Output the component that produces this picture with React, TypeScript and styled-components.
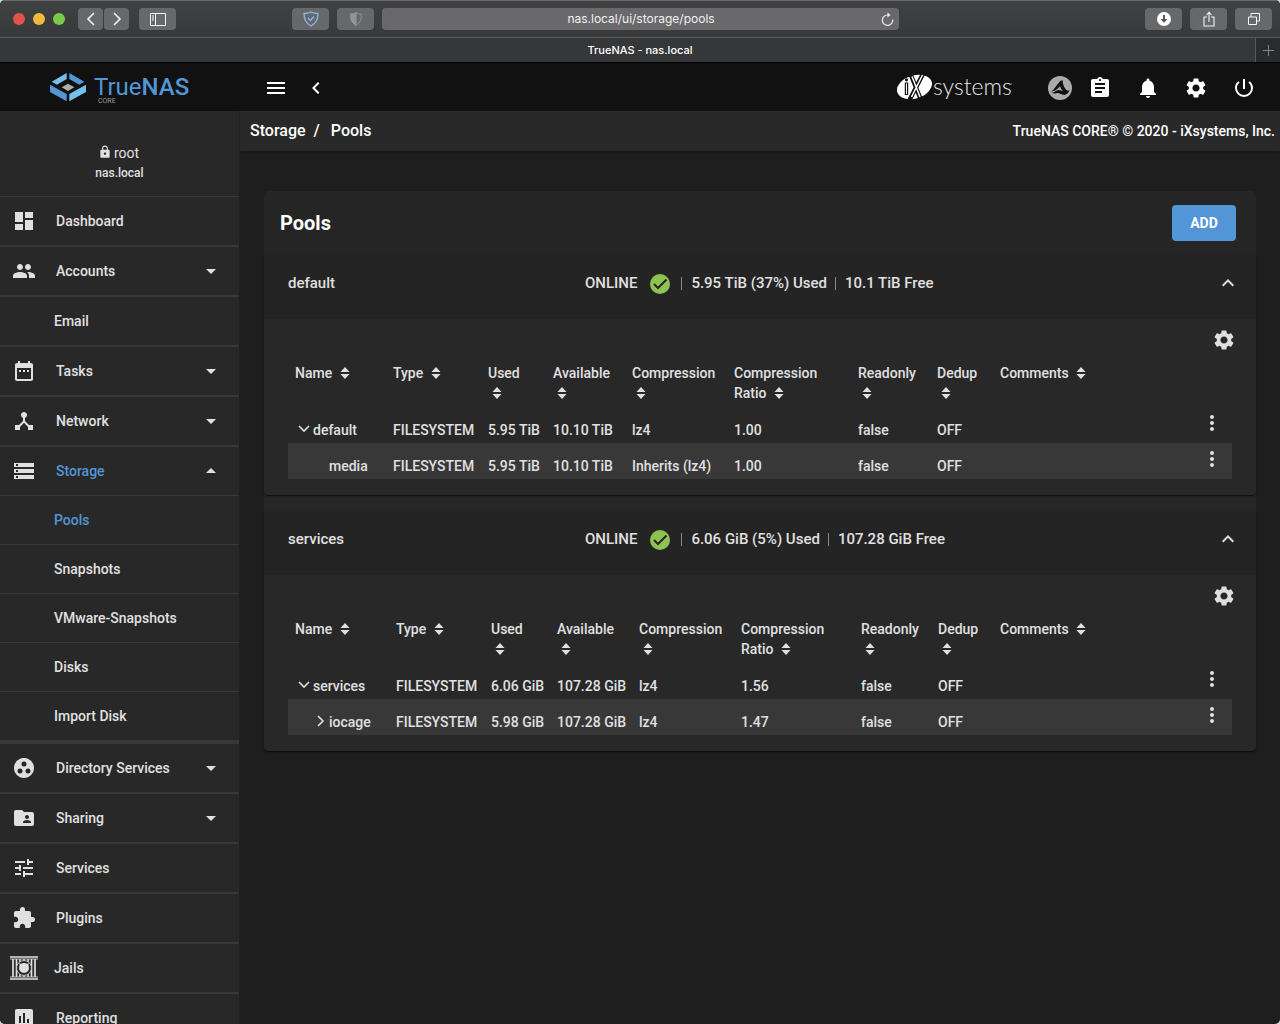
import React from "react";
import styled, { createGlobalStyle } from "styled-components";
import {
  MdArrowDropDown,
  MdArrowDropUp,
  MdAssessment,
  MdAssignment,
  MdChevronLeft,
  MdDashboard,
  MdDateRange,
  MdDeviceHub,
  MdExpandLess,
  MdExtension,
  MdFolderShared,
  MdGroupWork,
  MdLock,
  MdMenu,
  MdMoreVert,
  MdNotifications,
  MdPeople,
  MdPowerSettingsNew,
  MdSettings,
  MdStorage,
  MdTune,
} from "react-icons/md";

const color = {
  page: "#1e1e1e",
  bar: "#111111",
  panel: "#282828",
  panelHead: "#242424",
  stripe: "#383838",
  line: "#383838",
  text: "#e0e0e0",
  white: "#ffffff",
  primary: "#5396d8",
  green: "#8fc351",
};

const weight = { label: 500, bold: 700 };

const GlobalStyle = createGlobalStyle`
  * { box-sizing: border-box; }
  body {
    margin: 0;
    background: #d8d8d8;
    font-family: Roboto, "Liberation Sans", sans-serif;
    font-size: 14px;
    line-height: 20px;
    color: ${color.text};
  }
  button {
    border: 0;
    padding: 0;
    background: none;
    color: inherit;
    font: inherit;
    cursor: pointer;
  }
  svg { display: block; }
`;

/* ---------- Browser window ---------- */

const Window = styled.div`
  display: flex;
  flex-direction: column;
  height: 100vh;
  overflow: hidden;
  border-radius: 5px;
  background: ${color.page};
`;

const Toolbar = styled.div`
  display: flex;
  align-items: center;
  gap: 8px;
  height: 38px;
  flex: none;
  padding: 0 8px 0 13px;
  border-top: 1px solid #6a6b6c;
  border-bottom: 1px solid #58595b;
  background: linear-gradient(#404143, #38393b);
`;

const Lights = styled.div`
  display: flex;
  gap: 8px;
  margin-right: 5px;
`;

const Light = styled.button<{ $fill: string }>`
  width: 12px;
  height: 12px;
  border-radius: 50%;
  background: ${(p) => p.$fill};
`;

const NavPair = styled.div`
  display: flex;
  gap: 1px;
  margin-right: 2px;
`;

const ToolButton = styled.button<{ $narrow?: boolean }>`
  display: flex;
  align-items: center;
  justify-content: center;
  width: ${(p) => (p.$narrow ? 25 : 37)}px;
  height: 22px;
  border-radius: 4px;
  background: #67686a;
  color: #f4f4f4;
`;

const Shields = styled.div`
  display: flex;
  gap: 8px;
  margin-left: 108px;
`;

const Address = styled.form`
  display: flex;
  align-items: center;
  flex: 1;
  min-width: 0;
  height: 22px;
  margin-right: 238px;
  padding: 0 5px 0 19px;
  border-radius: 4px;
  background: #69696b;
`;

const AddressInput = styled.input`
  flex: 1;
  min-width: 0;
  border: 0;
  outline: 0;
  background: none;
  text-align: center;
  font: 400 12px/16px Inter, "Liberation Sans", sans-serif;
  color: #f0f0f0;
`;

const TabBar = styled.div`
  display: flex;
  height: 25px;
  flex: none;
  border-bottom: 1px solid #000;
  background: #363739;
`;

const Tab = styled.div`
  flex: 1;
  padding-left: 25px;
  text-align: center;
  font: 500 11px/24px Inter, "Liberation Sans", sans-serif;
  color: ${color.white};
`;

const NewTab = styled.button`
  display: flex;
  align-items: center;
  justify-content: center;
  width: 25px;
  border-left: 1px solid #58595b;
  background: #2a2b2d;
  color: #88898a;
`;

/* ---------- Application bar ---------- */

const AppBar = styled.header`
  display: flex;
  align-items: center;
  height: 48px;
  flex: none;
  padding-top: 2px;
  background: ${color.bar};
  color: ${color.white};
`;

const Brand = styled.a`
  display: flex;
  justify-content: center;
  width: 240px;
  flex: none;
`;

const BarLeft = styled.div`
  display: flex;
  flex: 1;
  gap: 16px;
  padding-left: 24px;
`;

const BarRight = styled.div`
  display: flex;
  align-items: center;
  gap: 24px;
  padding-right: 24px;
`;

const BarLogos = styled.div`
  display: flex;
  align-items: center;
  gap: 32px;
  margin-right: -8px;
`;

/* ---------- Sidebar ---------- */

const Body = styled.div`
  display: flex;
  flex: 1;
  min-height: 0;
`;

const Sidebar = styled.aside`
  width: 240px;
  flex: none;
  overflow: hidden;
  border-right: 1px solid #202020;
  background: ${color.panel};
`;

const User = styled.div`
  padding: 32px 0 13px;
  text-align: center;
`;

const UserName = styled.div`
  display: flex;
  justify-content: center;
  gap: 2px;
  padding-right: 2px;
  font-size: 14px;

  svg {
    margin-top: 2px;
  }
`;

const HostName = styled.div`
  font-size: 12px;
  font-weight: ${weight.label};
`;

const Menu = styled.ul`
  margin: 0;
  padding: 0;
  list-style: none;
`;

const MenuItem = styled.li`
  border: solid ${color.line};
  border-width: 1px 0;
`;

const MenuLink = styled.a<{ $active?: boolean; $icon?: boolean; $tight?: boolean }>`
  display: flex;
  align-items: center;
  height: 48px;
  padding: 0 16px 0 ${(p) => (p.$icon ? 10 : 54)}px;
  gap: ${(p) => (p.$tight ? 16 : 18)}px;
  text-decoration: none;
  font-weight: ${weight.label};
  color: ${(p) => (p.$active ? color.primary : color.text)};
`;

const MenuIcon = styled.span`
  display: flex;
  justify-content: center;
  width: 28px;
  color: ${color.text};
`;

const MenuLabel = styled.span`
  flex: 1;
`;

const MenuArrow = styled.span`
  color: ${color.text};
`;

const SubMenu = styled.ul`
  margin: 0;
  padding: 0;
  list-style: none;
  border-bottom: 2px solid ${color.line};
`;

const SubItem = styled.li`
  border-top: 1px solid ${color.line};
`;

/* ---------- Page ---------- */

const Main = styled.main`
  flex: 1;
  min-width: 0;
  overflow: auto;
`;

const Crumbs = styled.nav`
  display: flex;
  align-items: center;
  justify-content: space-between;
  height: 40px;
  padding: 0 5px 0 10px;
  background: #292929;
  box-shadow: 0 1px 2px rgba(0, 0, 0, 0.3);
  font-weight: ${weight.label};
  color: ${color.white};
`;

const Trail = styled.div`
  display: flex;
  gap: 8px;
  font-size: 16px;

  a {
    color: inherit;
    text-decoration: none;
  }

  a:last-child {
    margin-left: 3px;
  }
`;

const Card = styled.section`
  margin: 40px 24px;
  border-radius: 5px;
  background: #262626;
`;

const CardHead = styled.div`
  display: flex;
  align-items: center;
  justify-content: space-between;
  height: 64px;
  padding: 0 20px 0 16px;
  border-radius: 5px 5px 0 0;
  background: #252525;
`;

const CardTitle = styled.h1`
  margin: 0;
  font-size: 20px;
  line-height: 24px;
  font-weight: ${weight.bold};
  color: ${color.white};
`;

const AddButton = styled.button`
  width: 64px;
  height: 36px;
  border-radius: 4px;
  background: ${color.primary};
  font-weight: ${weight.bold};
  color: ${color.white};
`;

const Panels = styled.div`
  display: flex;
  flex-direction: column;
  gap: 16px;
`;

const Panel = styled.section`
  border-radius: 4px;
  background: ${color.panel};
  box-shadow: 0 2px 1px -1px rgba(0, 0, 0, 0.3), 0 1px 1px rgba(0, 0, 0, 0.2),
    0 1px 3px rgba(0, 0, 0, 0.16);
`;

const PanelHead = styled.div`
  display: grid;
  grid-template-columns: 8fr 17fr 24px;
  align-items: center;
  height: 64px;
  padding: 0 16px 8px 24px;
  background: ${color.panelHead};
  font-size: 15px;
`;

const PoolName = styled.h2`
  margin: 0;
  font-size: 15px;
  font-weight: ${weight.label};
`;

const PoolStatus = styled.div`
  display: flex;
  align-items: center;
  font-weight: ${weight.label};
`;

const Health = styled.span`
  margin: 2px 9px 0 11px;
`;

const Divider = styled.span`
  width: 1px;
  height: 13px;
  margin-right: 9px;
  background: #8a8a8a;
`;

const Usage = styled.span`
  margin-right: 8px;
`;

const PanelTools = styled.div`
  display: flex;
  justify-content: flex-end;
  padding: 9px 20px 11px;
`;

const TableBox = styled.div`
  padding: 0 24px 16px;
`;

const Table = styled.table`
  width: 100%;
  table-layout: fixed;
  border-collapse: collapse;
  font-weight: ${weight.label};
`;

const HeadCell = styled.th`
  padding: 0 7px 4px;
  text-align: left;
  vertical-align: top;
  font-weight: ${weight.label};
`;

const SortButton = styled.button`
  display: block;
  text-align: left;
`;

const SortMark = styled.svg`
  display: inline-block;
  margin: 0 6px 0 4px;
  vertical-align: -1px;
`;

const Row = styled.tr`
  &:nth-child(even) {
    background: ${color.stripe};
  }
`;

const Cell = styled.td`
  height: 36px;
  padding: 13px 7px 3px;
  vertical-align: top;
  white-space: nowrap;
`;

const ActionCell = styled.td`
  padding: 4px 8px;
  vertical-align: top;

  button {
    display: block;
    margin: 0 0 0 auto;
  }
`;

const TreeName = styled.span<{ $depth: number }>`
  display: flex;
  align-items: center;
  gap: 2px;
  padding-left: ${(p) => 2 + p.$depth * 16}px;
`;

const TreeSlot = styled.span`
  width: 14px;
`;

/* ---------- Drawings ---------- */

const TrueNasLogo = () => (
  <svg width="142" height="34" viewBox="0 0 142 34" role="img" aria-label="TrueNAS Core">
    <g transform="translate(1 2) scale(0.3333)">
      <path d="M50 0v18L21 35 5 26z" fill="#73bfee" />
      <path d="M58 0l45 26-15 9-30-17z" fill="#5396d8" />
      <path d="M0 35l50 28v22L0 57z" fill="#5396d8" />
      <path d="M108 35v22L58 85V63z" fill="#73bfee" />
      <path d="M35 43l19-11 19 11-19 11z" fill="#aeadae" />
    </g>
    <text x="45" y="24" fontSize="24" fontFamily="Roboto, sans-serif" fill="#5396d8">
      True<tspan fontWeight="500">NAS</tspan>
    </text>
    <text x="49" y="32" fontSize="7" fontFamily="Roboto, sans-serif" fill="#9a9a9a">
      CORE
    </text>
  </svg>
);

const IxLogo = () => (
  <svg width="120" height="34" viewBox="0 0 120 34" role="img" aria-label="iXsystems">
    <ellipse cx="18.500" cy="16" rx="18" ry="11.600" transform="rotate(-17 18.500 16)" fill="#fff" />
    <path d="M10.500 11.500v12.500" stroke="#111" strokeWidth="3.400" />
    <path d="M10.500 12.500v10.500" stroke="#fff" strokeWidth="1" />
    <circle cx="10.500" cy="8.800" r="1.600" fill="#111" />
    <path d="M14.500 3L25 29M27.500 2L13.500 29" stroke="#111" strokeWidth="4.400" />
    <path d="M16 5.500L24 26M26.500 4L15.500 26" stroke="#fff" strokeWidth="1.500" />
    <text x="37" y="24" fontSize="23" fontWeight="300" fontFamily="Lato, sans-serif" fill="#e4e4e4">systems</text>
    <path d="M113 13h3" stroke="#999" />
  </svg>
);

const TrueCommandIcon = () => (
  <svg width="24" height="24" viewBox="0 0 24 24">
    <circle cx="12" cy="12" r="12" fill="#aaa" />
    <path
      d="M2.500 15.500C6 15 8.500 8.500 13 4.500h1.800c-.3 3 1 6 2.700 8.500 1.200 1.500 2.500 2 4 1-1 3.500-3.500 5.500-6.500 4.800-2.500-.6-4-2.300-6-1.800-2 .8-4 .8-5.500-.2 2.500 0 4.500-2.300 6.500-2.800 2-.3 3.200.8 5 1-1.800-1.500-2.500-3-3-5-2 2.500-4.500 5.500-9.500 5.500z"
      fill="#111"
    />
  </svg>
);

const JailIcon = () => (
  <svg width="28" height="24" viewBox="0 0 28 24" fill="none" stroke="currentColor">
    <path d="M0 1h28M0 23h28" strokeWidth="1.600" />
    <path d="M0 3h28M0 21h28" strokeWidth="0.800" />
    <path d="M3 3v18M6.500 3v18M21.500 3v18M25 3v18" strokeWidth="1.700" />
    <path d="M10 3v4M10 17v4M14 3v3M14 18v3M18 3v4M18 17v4" strokeWidth="1.500" />
    <circle cx="14" cy="12" r="7.500" fill="#282828" strokeWidth="0.800" />
    <circle cx="14" cy="12" r="5" fill="currentColor" stroke="none" />
    <path d="M9 7l3 1.500-2 2zM19 7l-3 1.500 2 2z" fill="currentColor" stroke="none" />
  </svg>
);

const HealthIcon = () => (
  <svg width="24" height="24" viewBox="0 0 24 24">
    <circle cx="12" cy="12" r="10" fill={color.green} />
    <path d="M6 12l4 4 8.500-8.500" fill="none" stroke="#242424" strokeWidth="2" />
  </svg>
);

const SortIcon = () => (
  <SortMark width="10" height="12" viewBox="0 0 10 12" fill="currentColor" aria-hidden>
    <path d="M5 0l4.500 5h-9zM5 12L.5 7h9z" />
  </SortMark>
);

const Stroke = ({ d, size = 14, width = 2 }: { d: string; size?: number; width?: number }) => (
  <svg width={size} height={size} viewBox="0 0 14 14" fill="none" stroke="currentColor" strokeWidth={width}>
    <path d={d} />
  </svg>
);

/* ---------- Data ---------- */

type Entry = {
  label: string;
  icon?: React.ReactNode;
  arrow?: "down" | "up";
  tight?: boolean;
  children?: string[];
};

const menu: Entry[] = [
  { label: "Dashboard", icon: <MdDashboard size={24} /> },
  { label: "Accounts", icon: <MdPeople size={24} />, arrow: "down" },
  { label: "Email" },
  { label: "Tasks", icon: <MdDateRange size={24} />, arrow: "down" },
  { label: "Network", icon: <MdDeviceHub size={24} />, arrow: "down" },
  {
    label: "Storage",
    icon: <MdStorage size={24} />,
    arrow: "up",
    children: ["Pools", "Snapshots", "VMware-Snapshots", "Disks", "Import Disk"],
  },
  { label: "Directory Services", icon: <MdGroupWork size={24} />, arrow: "down" },
  { label: "Sharing", icon: <MdFolderShared size={24} />, arrow: "down" },
  { label: "Services", icon: <MdTune size={24} /> },
  { label: "Plugins", icon: <MdExtension size={24} /> },
  { label: "Jails", icon: <JailIcon />, tight: true },
  { label: "Reporting", icon: <MdAssessment size={24} /> },
];

const columns = [
  "Name", "Type", "Used", "Available", "Compression",
  "Compression Ratio", "Readonly", "Dedup", "Comments",
];

type Dataset = { name: string; depth: number; toggle?: "open" | "closed"; values: string[] };
type Pool = { name: string; used: string; free: string; widths: number[]; rows: Dataset[] };

const pools: Pool[] = [
  {
    name: "default",
    used: "5.95 TiB (37%) Used",
    free: "10.1 TiB Free",
    widths: [98, 95, 65, 79, 102, 124, 79, 63],
    rows: [
      { name: "default", depth: 0, toggle: "open", values: ["FILESYSTEM", "5.95 TiB", "10.10 TiB", "lz4", "1.00", "false", "OFF", ""] },
      { name: "media", depth: 1, values: ["FILESYSTEM", "5.95 TiB", "10.10 TiB", "Inherits (lz4)", "1.00", "false", "OFF", ""] },
    ],
  },
  {
    name: "services",
    used: "6.06 GiB (5%) Used",
    free: "107.28 GiB Free",
    widths: [101, 95, 66, 82, 102, 120, 77, 62],
    rows: [
      { name: "services", depth: 0, toggle: "open", values: ["FILESYSTEM", "6.06 GiB", "107.28 GiB", "lz4", "1.56", "false", "OFF", ""] },
      { name: "iocage", depth: 1, toggle: "closed", values: ["FILESYSTEM", "5.98 GiB", "107.28 GiB", "lz4", "1.47", "false", "OFF", ""] },
    ],
  },
];

/* ---------- Components ---------- */

const BrowserChrome = () => (
  <>
    <Toolbar>
      <Lights>
        <Light $fill="#e0534b" aria-label="Close" />
        <Light $fill="#f0bb3c" aria-label="Minimize" />
        <Light $fill="#76cc4a" aria-label="Zoom" />
      </Lights>
      <NavPair>
        <ToolButton $narrow aria-label="Back"><Stroke d="M10 1L4 7l6 6" width={1.6} /></ToolButton>
        <ToolButton $narrow aria-label="Forward"><Stroke d="M4 1l6 6-6 6" width={1.6} /></ToolButton>
      </NavPair>
      <ToolButton aria-label="Sidebar">
        <svg width="16" height="13" viewBox="0 0 16 13" fill="none" stroke="currentColor">
          <path d="M.5.5h15v12H.5zM5.500.5v12M2 3h2M2 5h2M2 7h2" />
        </svg>
      </ToolButton>
      <Shields>
        <ToolButton aria-label="Content blocker">
          <svg width="16" height="16" viewBox="0 0 16 16" fill="none" stroke="#86b7ea" strokeWidth="1.300">
            <path d="M8 1c2 1 5 1.500 7 1.500C15 8 13 12.500 8 15 3 12.500 1 8 1 2.500 3 2.500 6 2 8 1z" />
            <path d="M5 7l2.500 2.500L11 5.500" />
          </svg>
        </ToolButton>
        <ToolButton aria-label="Privacy report">
          <svg width="12" height="14" viewBox="0 0 12 14" fill="none" stroke="#929394">
            <path d="M6 .7c1.500 1 3.500 1.300 5.300 1.300C11.500 7 10.500 11 6 13.300 1.500 11 .5 7 .7 2 2.500 2 4.500 1.700 6 .7z" />
            <path d="M6 .7C4.500 1.700 2.500 2 .7 2 .5 7 1.500 11 6 13.300z" fill="#929394" />
          </svg>
        </ToolButton>
      </Shields>
      <Address>
        <AddressInput aria-label="Address" defaultValue="nas.local/ui/storage/pools" />
        <button type="button" aria-label="Reload">
          <svg width="13" height="14" viewBox="0 0 13 14" fill="none" stroke="#ededed" strokeWidth="1.200">
            <path d="M11.700 7.500A5.200 5.200 0 1 1 6.500 3H8" />
            <path d="M6.500.5L9.500 3l-3 2.500z" fill="#ededed" stroke="none" />
          </svg>
        </button>
      </Address>
      <ToolButton aria-label="Downloads">
        <svg width="14" height="14" viewBox="0 0 14 14">
          <circle cx="7" cy="7" r="7" fill="#fff" />
          <path d="M6 3h2v4h2.500L7 10.800 3.500 7H6z" fill="#58595b" />
        </svg>
      </ToolButton>
      <ToolButton aria-label="Share">
        <svg width="12" height="16" viewBox="0 0 12 16" fill="none" stroke="currentColor" strokeWidth="1.100">
          <path d="M4 6H1v9h10V6H8M6 11V1.500M3.500 4L6 1.300 8.500 4" />
        </svg>
      </ToolButton>
      <ToolButton aria-label="Show tabs">
        <svg width="12" height="12" viewBox="0 0 12 12" fill="none" stroke="currentColor">
          <path d="M.5 4h8v7.500h-8zM3 4V.5h8.500V8h-3" />
        </svg>
      </ToolButton>
    </Toolbar>
    <TabBar>
      <Tab>TrueNAS - nas.local</Tab>
      <NewTab aria-label="New tab"><Stroke d="M7 1v12M1 7h12" size={13} width={1} /></NewTab>
    </TabBar>
  </>
);

const NavLink = ({ entry }: { entry: Entry }) => (
  <MenuLink href="#" $icon={!!entry.icon} $tight={entry.tight} $active={!!entry.children}>
    {entry.icon && <MenuIcon>{entry.icon}</MenuIcon>}
    <MenuLabel>{entry.label}</MenuLabel>
    {entry.arrow && (
      <MenuArrow>
        {entry.arrow === "up" ? <MdArrowDropUp size={24} /> : <MdArrowDropDown size={24} />}
      </MenuArrow>
    )}
  </MenuLink>
);

const PoolPanel = ({ pool }: { pool: Pool }) => (
  <Panel>
    <PanelHead>
      <PoolName>{pool.name}</PoolName>
      <PoolStatus>
        <span>ONLINE</span>
        <Health><HealthIcon /></Health>
        <Divider />
        <Usage>{pool.used}</Usage>
        <Divider />
        <span>{pool.free}</span>
      </PoolStatus>
      <button aria-label={`Collapse ${pool.name}`}><MdExpandLess size={24} /></button>
    </PanelHead>
    <PanelTools>
      <button aria-label={`${pool.name} settings`}><MdSettings size={24} /></button>
    </PanelTools>
    <TableBox>
      <Table>
        <colgroup>
          {pool.widths.map((w, i) => <col key={i} width={w} />)}
          <col />
          <col width={48} />
        </colgroup>
        <thead>
          <tr>
            {columns.map((c) => (
              <HeadCell key={c} scope="col">
                <SortButton>{c} <SortIcon /></SortButton>
              </HeadCell>
            ))}
            <HeadCell as="td" />
          </tr>
        </thead>
        <tbody>
          {pool.rows.map((r) => (
            <Row key={r.name}>
              <Cell>
                <TreeName $depth={r.depth}>
                  <TreeSlot>
                    {r.toggle && (
                      <button aria-label={`Toggle ${r.name}`}>
                        <Stroke d={r.toggle === "open" ? "M2 5l5 5 5-5" : "M5 3l5 5-5 5"} width={1.6} />
                      </button>
                    )}
                  </TreeSlot>
                  {r.name}
                </TreeName>
              </Cell>
              {r.values.map((v, i) => <Cell key={i}>{v}</Cell>)}
              <ActionCell>
                <button aria-label={`${r.name} actions`}><MdMoreVert size={24} /></button>
              </ActionCell>
            </Row>
          ))}
        </tbody>
      </Table>
    </TableBox>
  </Panel>
);

export default function App() {
  return (
    <>
      <GlobalStyle />
      <Window>
        <BrowserChrome />
        <AppBar>
          <Brand href="#"><TrueNasLogo /></Brand>
          <BarLeft>
            <button aria-label="Menu"><MdMenu size={24} /></button>
            <button aria-label="Collapse menu"><MdChevronLeft size={24} /></button>
          </BarLeft>
          <BarRight>
            <BarLogos>
              <IxLogo />
              <button aria-label="TrueCommand"><TrueCommandIcon /></button>
            </BarLogos>
            <button aria-label="Tasks"><MdAssignment size={24} /></button>
            <button aria-label="Alerts"><MdNotifications size={24} /></button>
            <button aria-label="Settings"><MdSettings size={24} /></button>
            <button aria-label="Power"><MdPowerSettingsNew size={24} /></button>
          </BarRight>
        </AppBar>
        <Body>
          <Sidebar>
            <User>
              <UserName><MdLock size={14} /> root</UserName>
              <HostName>nas.local</HostName>
            </User>
            <Menu>
              {menu.map((entry) => (
                <MenuItem key={entry.label}>
                  <NavLink entry={entry} />
                  {entry.children && (
                    <SubMenu>
                      {entry.children.map((c) => (
                        <SubItem key={c}>
                          <MenuLink href="#" $active={c === "Pools"}>{c}</MenuLink>
                        </SubItem>
                      ))}
                    </SubMenu>
                  )}
                </MenuItem>
              ))}
            </Menu>
          </Sidebar>
          <Main>
            <Crumbs>
              <Trail>
                <a href="#">Storage</a>
                <span>/</span>
                <a href="#">Pools</a>
              </Trail>
              <span>TrueNAS CORE® © 2020 - iXsystems, Inc.</span>
            </Crumbs>
            <Card>
              <CardHead>
                <CardTitle>Pools</CardTitle>
                <AddButton>ADD</AddButton>
              </CardHead>
              <Panels>
                {pools.map((pool) => <PoolPanel key={pool.name} pool={pool} />)}
              </Panels>
            </Card>
          </Main>
        </Body>
      </Window>
    </>
  );
}
